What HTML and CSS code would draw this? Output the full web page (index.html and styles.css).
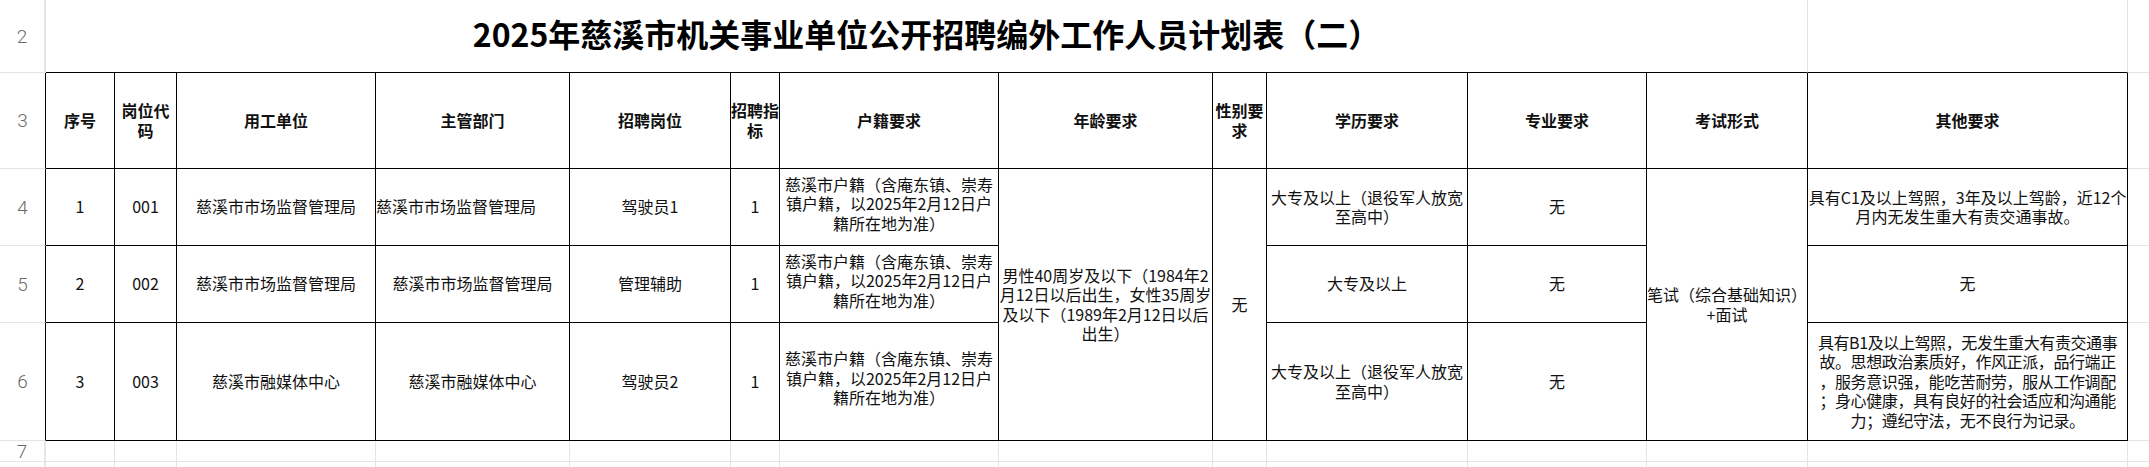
FILE: index.html
```html
<!DOCTYPE html>
<html lang="zh-CN">
<head>
<meta charset="utf-8">
<title>2025年慈溪市机关事业单位公开招聘编外工作人员计划表（二）</title>
<link rel="stylesheet" href="styles.css">
</head>
<body>
<table class="sheet">
  <colgroup>
    <col class="w-rh"><col class="w-no"><col class="w-code"><col class="w-unit"><col class="w-dept"><col class="w-post"><col class="w-num"><col class="w-hukou"><col class="w-age"><col class="w-sex"><col class="w-edu"><col class="w-major"><col class="w-exam"><col class="w-other"><col class="w-extra">
  </colgroup>
  <tr class="r2">
    <td class="rh">2</td>
    <td class="title kb" colspan="12">2025年慈溪市机关事业单位公开招聘编外工作人员计划表（二）</td>
    <td class="kb"></td>
    <td></td>
  </tr>
  <tr class="r3">
    <td class="rh kr">3</td>
    <td class="k hd">序号</td>
    <td class="k hd">岗位代码</td>
    <td class="k hd">用工单位</td>
    <td class="k hd">主管部门</td>
    <td class="k hd">招聘岗位</td>
    <td class="k hd">招聘指标</td>
    <td class="k hd">户籍要求</td>
    <td class="k hd">年龄要求</td>
    <td class="k hd">性别要求</td>
    <td class="k hd">学历要求</td>
    <td class="k hd">专业要求</td>
    <td class="k hd">考试形式</td>
    <td class="k hd">其他要求</td>
    <td></td>
  </tr>
  <tr class="r4">
    <td class="rh kr">4</td>
    <td class="k">1</td>
    <td class="k">001</td>
    <td class="k">慈溪市市场监督管理局</td>
    <td class="k left">慈溪市市场监督管理局</td>
    <td class="k">驾驶员1</td>
    <td class="k">1</td>
    <td class="k nw up">慈溪市户籍（含庵东镇、崇寿<br>镇户籍，以2025年2月12日户<br>籍所在地为准）</td>
    <td class="k nw" rowspan="3">男性40周岁及以下（1984年2<br>月12日以后出生，女性35周岁<br>及以下（1989年2月12日以后<br>出生）</td>
    <td class="k" rowspan="3">无</td>
    <td class="k nw">大专及以上（退役军人放宽<br>至高中）</td>
    <td class="k">无</td>
    <td class="k nw" rowspan="3">笔试（综合基础知识）<br>+面试</td>
    <td class="k nw">具有C1及以上驾照，3年及以上驾龄，近12个<br>月内无发生重大有责交通事故。</td>
    <td></td>
  </tr>
  <tr class="r5">
    <td class="rh kr">5</td>
    <td class="k">2</td>
    <td class="k">002</td>
    <td class="k">慈溪市市场监督管理局</td>
    <td class="k">慈溪市市场监督管理局</td>
    <td class="k">管理辅助</td>
    <td class="k">1</td>
    <td class="k nw up">慈溪市户籍（含庵东镇、崇寿<br>镇户籍，以2025年2月12日户<br>籍所在地为准）</td>
    <td class="k">大专及以上</td>
    <td class="k">无</td>
    <td class="k">无</td>
    <td></td>
  </tr>
  <tr class="r6">
    <td class="rh kr">6</td>
    <td class="k">3</td>
    <td class="k">003</td>
    <td class="k">慈溪市融媒体中心</td>
    <td class="k">慈溪市融媒体中心</td>
    <td class="k">驾驶员2</td>
    <td class="k">1</td>
    <td class="k nw up">慈溪市户籍（含庵东镇、崇寿<br>镇户籍，以2025年2月12日户<br>籍所在地为准）</td>
    <td class="k nw">大专及以上（退役军人放宽<br>至高中）</td>
    <td class="k">无</td>
    <td class="k nw tight">具有B1及以上驾照，无发生重大有责交通事<br>故。思想政治素质好，作风正派，品行端正<br>，服务意识强，能吃苦耐劳，服从工作调配<br>；身心健康，具有良好的社会适应和沟通能<br>力；遵纪守法，无不良行为记录。</td>
    <td></td>
  </tr>
  <tr class="r7">
    <td class="rh">7</td>
    <td></td><td></td><td></td><td></td><td></td><td></td><td></td><td></td><td></td><td></td><td></td><td></td><td></td><td></td>
  </tr>
  <tr class="r8">
    <td class="rh"></td>
    <td></td><td></td><td></td><td></td><td></td><td></td><td></td><td></td><td></td><td></td><td></td><td></td><td></td><td></td>
  </tr>
</table>
</body>
</html>
```

FILE: styles.css
```css
* { box-sizing: border-box; }

html, body {
  margin: 0;
  padding: 0;
  background: #ffffff;
}

body {
  width: 2149px;
  height: 467px;
  overflow: hidden;
  font-family: "Noto Sans CJK SC", "Noto Sans", sans-serif;
  color: #111111;
}

.sheet {
  border-collapse: separate;
  border-spacing: 0;
  table-layout: fixed;
  width: 2328px;
}

.w-rh { width: 46px; }
.w-no { width: 69px; }
.w-code { width: 62px; }
.w-unit { width: 199px; }
.w-dept { width: 194px; }
.w-post { width: 161px; }
.w-num { width: 49px; }
.w-hukou { width: 219px; }
.w-age { width: 214px; }
.w-sex { width: 54px; }
.w-edu { width: 201px; }
.w-major { width: 179px; }
.w-exam { width: 161px; }
.w-other { width: 320px; }
.w-extra { width: 200px; }

.r2 { height: 73px; }
.r3 { height: 96px; }
.r4 { height: 77px; }
.r5 { height: 77px; }
.r6 { height: 118px; }
.r7 { height: 21px; }
.r8 { height: 30px; }

.sheet td {
  border-right: 1px solid #e4e4e4;
  border-bottom: 1px solid #e4e4e4;
  padding: 0;
  text-align: center;
  vertical-align: middle;
  font-size: 16px;
  line-height: 19.5px;
  overflow: visible;
}

.sheet td.rh {
  font-family: Roboto, "Noto Sans", sans-serif;
  font-weight: 300;
  font-size: 19px;
  line-height: 1;
  color: #6b6b6b;
  border-right: 2px solid #e6e6e6;
}

.sheet td.k {
  border-right-color: #000000;
  border-bottom-color: #000000;
}

.sheet td.kb {
  border-bottom-color: #000000;
}

.sheet td.kr {
  border-right: 1px solid #000000;
}

.sheet td.hd {
  font-weight: 700;
}

.sheet td.title {
  font-size: 32px;
  font-weight: 700;
  line-height: 36px;
  white-space: nowrap;
  padding: 0 0 6px 0;
  color: #000000;
}

.sheet td.left {
  text-align: left;
}

.sheet td.nw {
  white-space: nowrap;
}

.sheet td.up {
  padding-bottom: 6px;
}

.sheet td.tight {
  letter-spacing: -0.4px;
}
```
